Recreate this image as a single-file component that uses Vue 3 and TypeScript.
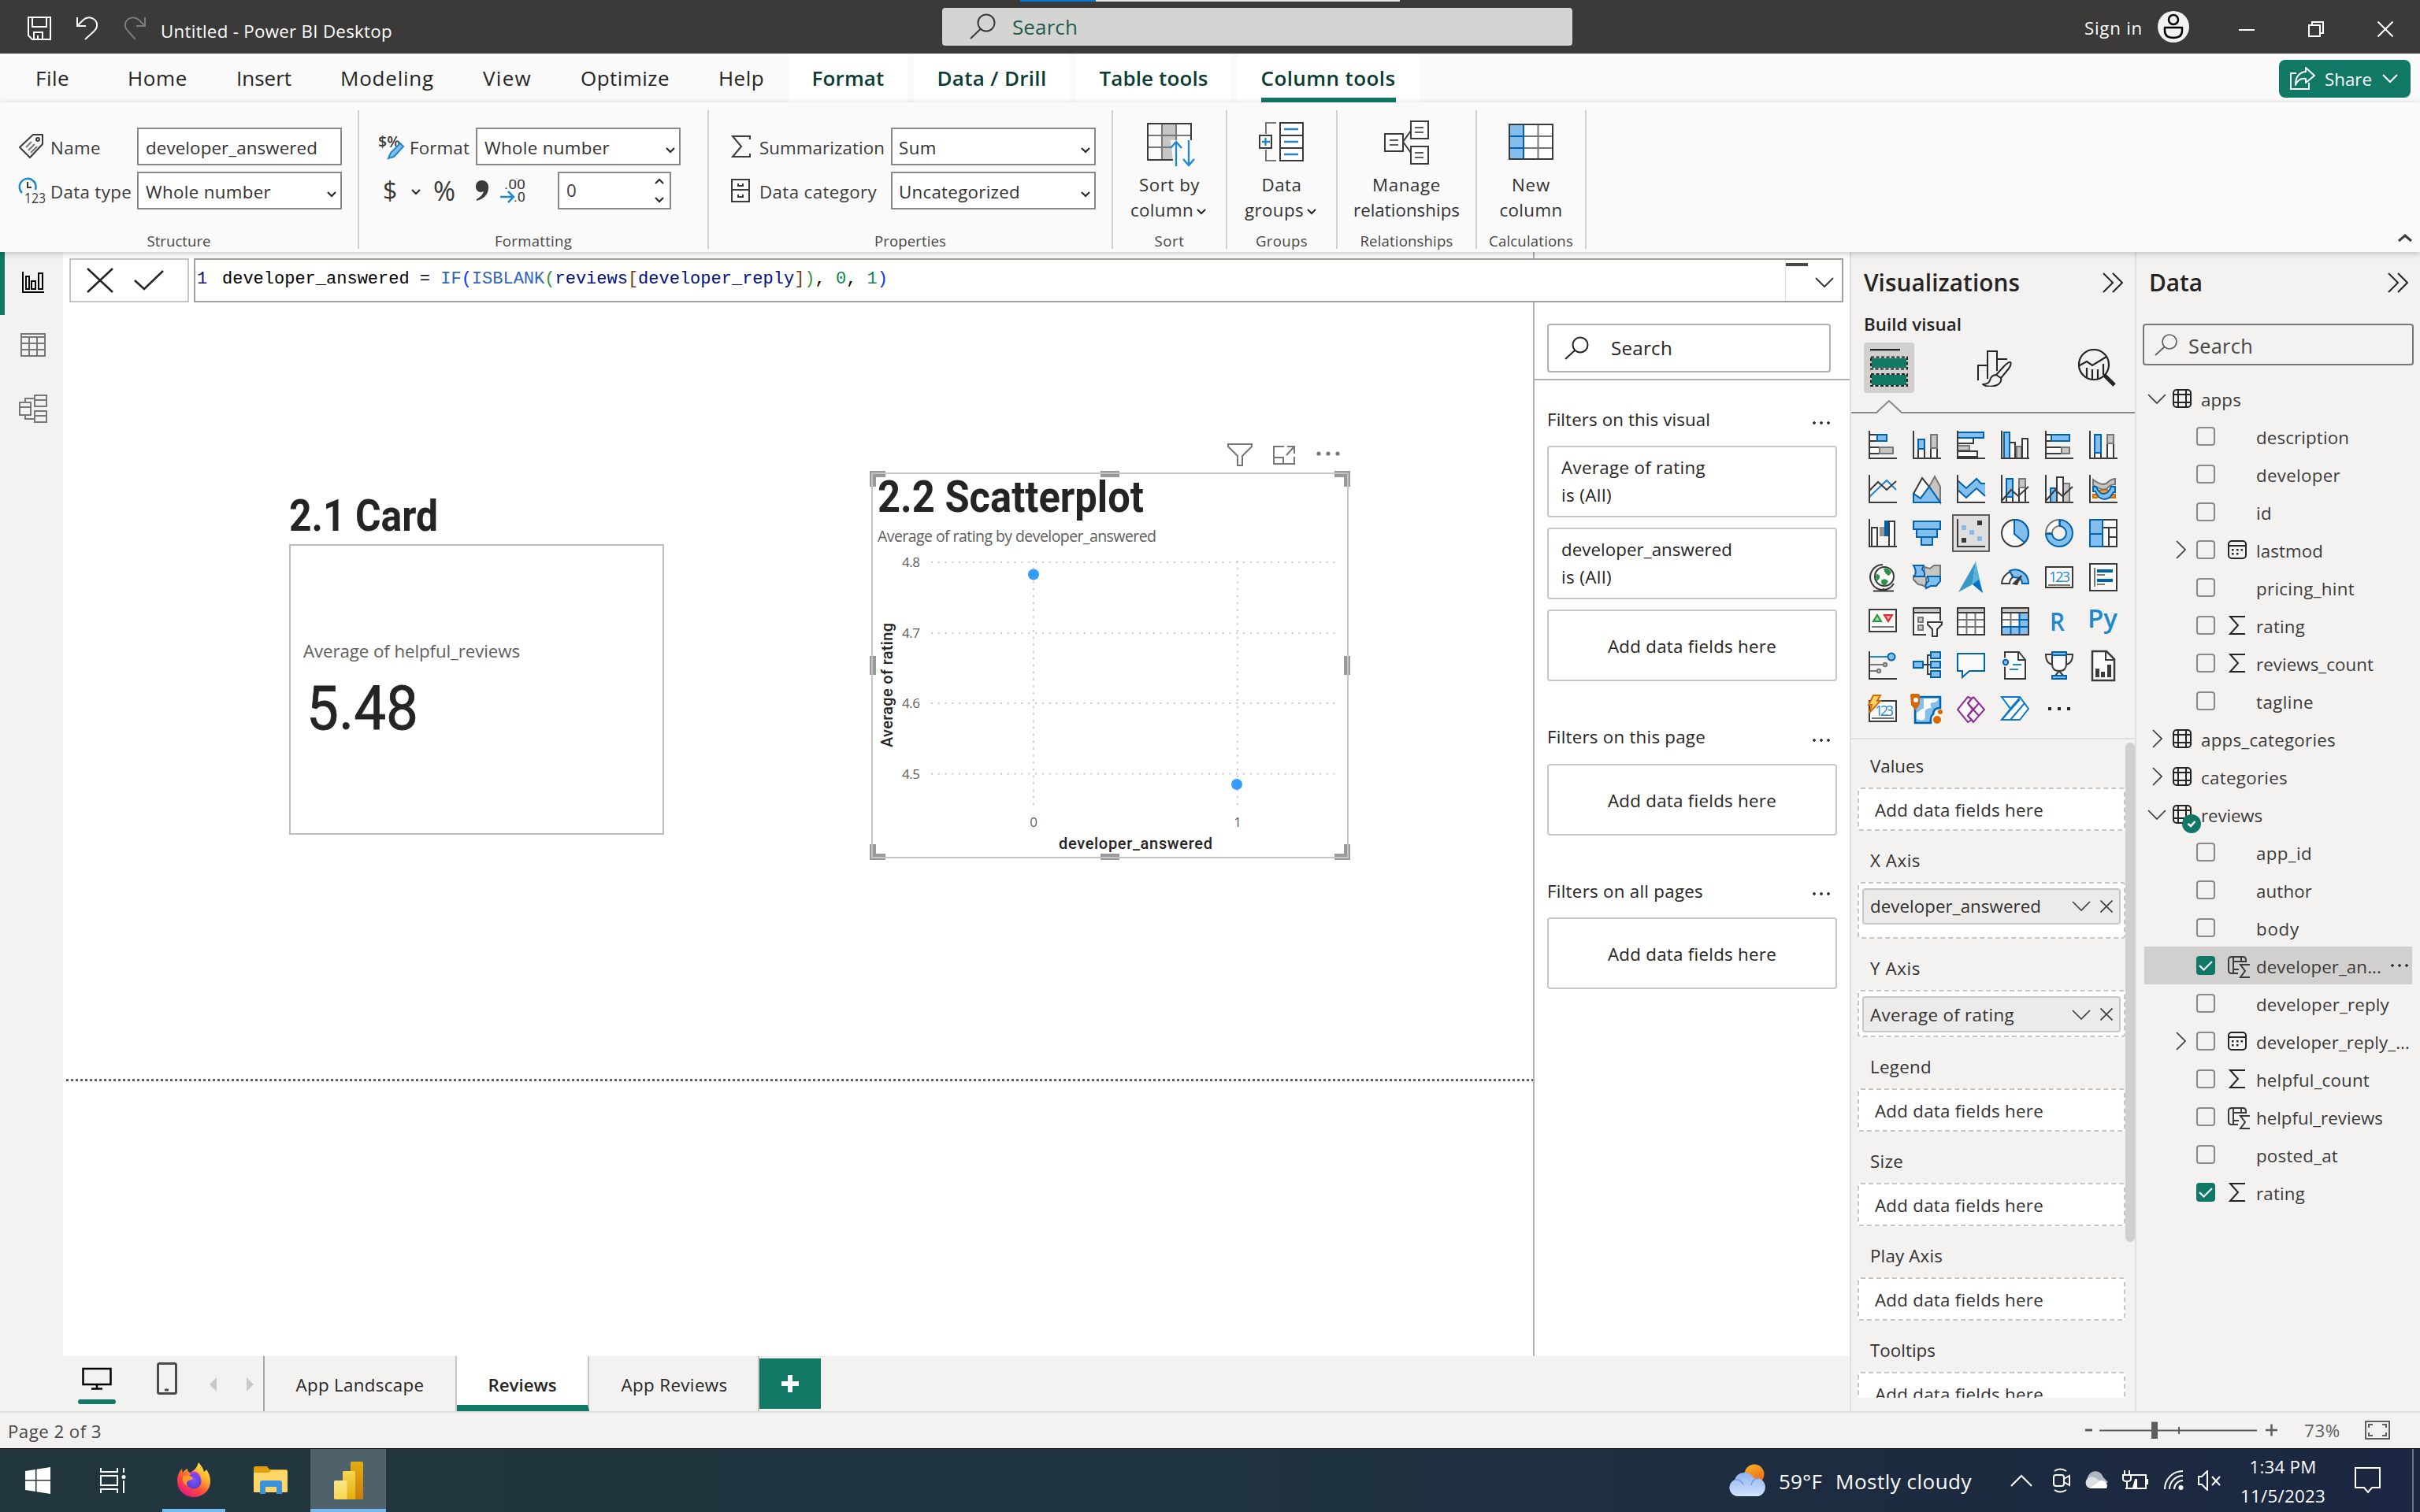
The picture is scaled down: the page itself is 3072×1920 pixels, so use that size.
<script setup lang="ts">
import type { Directive } from 'vue'

// Brings a label to its designed width whichever fallback font is in use:
// letter spacing by default, horizontal scaling with the "squeeze" modifier.
const vFit: Directive<HTMLElement, number> = {
  mounted(el, binding) {
    if (!binding.value) return
    const range = document.createRange()
    range.selectNodeContents(el)
    const natural = range.getBoundingClientRect().width
    const count = (el.textContent ?? '').length || 1
    if (binding.modifiers.squeeze) {
      el.style.transform = `scaleX(${(binding.value + 4) / natural})`
    } else {
      el.style.letterSpacing = `${(binding.value + 2 - natural) / count}px`
    }
  },
}

const D = '#3b3a38'
const B = '#0063b1'
const L = '#83beec'
const G = '#797774'
const S = '#c8c6c4'
const W = '#fafafa'

const box = (x1: number, y1: number, x2: number, y2: number, fill = W, stroke = D, sw = 2) =>
  `<rect x="${x1}" y="${y1}" width="${x2 - x1}" height="${y2 - y1}" fill="${fill}" stroke="${stroke}" stroke-width="${sw}"/>`
const line = (d: string, stroke = D, sw = 2, fill = 'none') =>
  `<path d="${d}" fill="${fill}" stroke="${stroke}" stroke-width="${sw}"/>`
const axis = line('M1 0V35H36')

const visuals: { name: string; art: string; on?: boolean }[] = [
  { name: 'stacked-bar', art: box(1, 5, 11, 13) + box(1, 21, 14, 29) + box(11, 5, 23, 13, L, B) + box(14, 21, 31, 29, S, G) + axis },
  { name: 'stacked-column', art: box(7, 23, 15, 35) + box(23, 22, 31, 35) + box(7, 11, 15, 23, L, B) + box(23, 5, 31, 22, S, G) + axis },
  { name: 'clustered-bar', art: box(1, 9, 21, 16) + box(1, 19, 16, 25, S, G) + box(1, 26, 26, 33) + box(1, 2, 34, 9, L, B) + axis },
  { name: 'clustered-column', art: box(11, 15, 18, 35) + box(20, 20, 26, 35, S, G) + box(27, 10, 34, 35) + box(4, 2, 11, 35, L, B) + axis },
  { name: 'full-bar', art: box(1, 5, 8, 13) + box(1, 21, 21, 29) + box(8, 5, 31, 13, L, B) + box(21, 21, 31, 29, S, G) + axis },
  { name: 'full-column', art: box(7, 28, 15, 35) + box(23, 16, 31, 35) + box(7, 5, 15, 28, L, B) + box(23, 5, 31, 16, S, G) + axis },
  { name: 'line', art: line('M1 28L23 7L35 19', '#1e88ce') + line('M1 20L12 9L23 19L35 8') + axis },
  { name: 'area', art: line('M21 15L28 2L35 15V35Z', G, 2, S) + line('M1 24L12 4L21 15L10 30Z', D, 2, W) + line('M1 24L10 30L21 15L35 35H1Z', B, 2, L) },
  { name: 'stacked-area', art: `<path d="M2 18L12 29L25 17L36 27V34H2Z" fill="${W}"/><path d="M2 8L12 18L25 5L31 10H36V27L25 17L12 29L2 19Z" fill="${L}"/>` + line('M1 7L12 17L25 5L31 11H36M1 19L12 29L25 17L36 27', B) + axis },
  { name: 'line-stacked', art: box(7, 28, 15, 35) + box(23, 16, 31, 35) + box(7, 5, 15, 28, L, B) + box(23, 5, 31, 16, S, G) + line('M1 33L13 19L22 27L35 15') + axis },
  { name: 'line-clustered', art: box(7, 17, 15, 35, L, B) + box(23, 11, 31, 35, S, G) + box(15, 3, 23, 35) + line('M1 33L13 19L22 27L35 15') + axis },
  { name: 'ribbon', art: line('M5 25H9C14 16 24 16 28 25H33V29H27C22 24 15 24 10 29H5Z', '#d86800', 2, '#f8a030') + line('M5 6Q18 16 24 9Q29 5 33 5V12Q27 12 22 18Q16 20 5 13Z', G, 2, S) + line('M5 15H9C13 26 23 28 28 15H33V22H31C25 34 13 34 8 21H5Z', B, 2, L) + axis },
  { name: 'waterfall', art: box(4, 11, 11, 35) + `<path d="M14 10h6v12h-6z" fill="#979593"/><path d="M20 2h5v20h-5z" fill="${B}"/>` + box(26, 3, 33, 35) + axis },
  { name: 'funnel', art: box(1, 3, 35, 13, L, B) + box(5, 13, 31, 23, L, B) + box(11, 23, 25, 33, L, B) },
  { name: 'scatter', on: true, art: `<path d="M6 8h6v6H6zM16 14h6v6h-6zM26 22h6v6h-6z" fill="${L}"/><path d="M26 2h6v6h-6zM6 24h6v6H6z" fill="${D}"/>` + axis },
  { name: 'pie', art: `<circle cx="18" cy="18" r="17" fill="${W}" stroke="${D}" stroke-width="2"/>` + line('M17 1A17 17 0 0 1 30 30L17 19Z', B, 2, L) },
  { name: 'donut', art: line('M18 1A17 17 0 0 0 1 18H9A9 9 0 0 1 18 9Z', G, 2, W) + line('M19 1A17 17 0 1 1 1 19H9A9 9 0 1 0 19 9Z', B, 2, L) },
  { name: 'treemap', art: box(17, 1, 35, 35) + line('M17 11H35M25 11V35M25 23H35') + box(1, 1, 17, 35, L, B) + line('M1 19H17', B) },
  { name: 'globe', art: `<circle cx="20" cy="17" r="12" fill="${W}" stroke="${D}" stroke-width="2"/><path d="M19 7q6-2 10 5l-3 4q-5-1-7-9zM10 14q5 0 4 5l-3 4q-3-5-1-9zM16 22q5-4 9 1l-4 6q-6-2-5-7z" fill="#2a9446"/>` + line('M18 2A16 16 0 1 0 32 26M19 32V35M6 35.5H32') },
  { name: 'filled-map', art: line('M15 5L22 7L27 3H35V18H17L17 31L12 28L7 27L1 21V16H14Z', G, 2, S) + line('M1 3H14L12 8Q16 11 15 17H2Q6 11 1 3Z', B, 2, L) + line('M19 17H35V23L30 29H23L17 32Q15 26 20 23Z', B, 2, L) },
  { name: 'azure-nav', art: '<path d="M24 -2L2 37L20 27Z" fill="#3999c6"/><path d="M24 -2L33 38L20 27Z" fill="#59b4d9"/><path d="M20 27L28 21L33 38Z" fill="#0072c6"/>' },
  { name: 'gauge', art: line('M1 26A17 17 0 0 1 12 11L15 18Q11 21 11 26Z', D, 2, W) + line('M11 10A17 17 0 0 1 35 26H27Q27 22 24 19L16 18Z', B, 2, L) + `<path d="M16 26L26 16L20 27Z" fill="${D}" stroke="${D}" stroke-width="2"/>` },
  { name: 'card', art: box(1, 5, 35, 31) + `<text x="5" y="24" font-family="Open Sans, sans-serif" font-size="18" textLength="27" fill="#1e88ce">123</text>` + line('M4 28H32', G) },
  { name: 'multi-card', art: box(1, 1, 35, 35) + line('M7 6V30M10 15H20M10 27H20', G) + line('M10 10H30M10 22H30', B, 4) },
  { name: 'kpi', art: box(1, 3, 35, 31) + line('M6 18L11 10L16 18Z', '#2a9446', 2, '#a4d8ac') + line('M20 10H30L25 18Z', '#d92c2c', 2, '#f8a0a0') + line('M4 25H32', G) },
  { name: 'slicer', art: box(1, 1, 35, 35) + box(1, 1, 35, 7, S) + box(7, 13, 13, 19, S, G) + box(7, 23, 13, 29, S, G) + `<path d="M17 17h22v20H17z" fill="#f3f2f1"/>` + line('M19 19H37V22L31 28V37H25V28L19 22Z', D, 2, W) },
  { name: 'table', art: box(1, 1, 35, 35) + line('M12.500 7V35M23.500 7V35M1 16H35M1 25H35', G) + box(1, 1, 35, 35, 'none') + box(1, 1, 35, 7, S) },
  { name: 'matrix', art: box(1, 1, 35, 35) + `<path d="M24 7h11v28H1V25h23z" fill="${L}"/>` + line('M12.500 7V25M1 16H24', G) + line('M12.500 25V35M23.500 7V35M1 25H35M24 16H35', B) + box(1, 1, 35, 35, 'none') + box(1, 1, 35, 7, S) },
  { name: 'r', art: `<text x="6" y="30" font-family="Open Sans, sans-serif" font-weight="600" font-size="33" textLength="19" lengthAdjust="spacingAndGlyphs" fill="#1e88ce">R</text>` },
  { name: 'py', art: `<text x="-2" y="26" font-family="Open Sans, sans-serif" font-weight="600" font-size="33" textLength="38" lengthAdjust="spacingAndGlyphs" fill="#1e88ce">Py</text>` },
  { name: 'influencers', art: line('M1 7H24', '#1e88ce') + line('M1 17H18M1 25H10', G) + `<circle cx="29" cy="7" r="4.500" fill="${L}" stroke="${B}" stroke-width="2"/><circle cx="21" cy="17" r="2.200" fill="${S}" stroke="${G}" stroke-width="2"/><circle cx="13" cy="25" r="2.200" fill="${S}" stroke="${G}" stroke-width="2"/>` + axis },
  { name: 'decomposition', art: line('M13 17H23M23 5H19V29H23') + box(1, 13, 13, 21, L, B) + box(23, 1, 35, 9, L, B) + box(23, 13, 35, 21, L, B) + box(23, 25, 35, 33, L, B) },
  { name: 'qna', art: line('M1 3H35V25H16L7 33V25H1Z', B, 2, W) },
  { name: 'narrative', art: line('M5 1H23L31 11V35H5Z', D, 2, W) + line('M22 1V11H31') + line('M15 17H26M11 23H22', '#1e88ce') + `<circle cx="6" cy="14" r="6" fill="#f3f2f1"/><circle cx="6" cy="14" r="3.200" fill="${L}" stroke="${B}" stroke-width="2"/>` },
  { name: 'trophy', art: line('M9 4H1Q1 17 12 17M27 4H35Q35 17 24 17') + line('M9 5H27V16Q27 25 18 25Q9 25 9 16Z', D, 2, W) + line('M18 25L13 31M18 25L23 31') + box(9, 1, 27, 5, L, B) + box(9, 31, 27, 35, L, B) },
  { name: 'paginated', art: line('M4 0H22L32 10V37H4Z', D, 2.5, W) + line('M21 0V11H32') + `<path d="M8 22h5v11H8zM15 26h5v7h-5zM23 17h5v16h-5z" fill="${D}"/>` },
  { name: 'card-new', art: box(1, 7, 35, 33) + `<text x="8" y="26" font-family="Open Sans, sans-serif" font-size="18" textLength="24" fill="#1e88ce">123</text>` + line('M4 29H32', G) + line('M6 0H15L11 7H15L1 22L4 12H0Z', '#d86800', 2, '#fdd06c') },
  { name: 'azure-map', art: line('M3 2H35V16Q26 16 26 24Q22 26 23 35H3Z', B, 2.5, L) + '<path d="M5 30Q17 35 16 24Q14 16 24 16Q20 8 28 9Q32 7 33 4H14V16L5 22Z" fill="#fafafa"/><path d="M-3 0q0-2 2-2h8q2 0 2 2v11l-5.500 8L-2 12z" fill="#d86800"/><circle cx="4" cy="6" r="3" fill="#fff"/><circle cx="31" cy="31" r="5" fill="#d86800"/><circle cx="35" cy="21" r="3" fill="#d86800"/>' },
  { name: 'power-apps', art: line('M14 2L1 18L14 34L19 31L14 26L20 18L14 10L19 4Z', '#8c2f98', 2, '#fff') + line('M21 2L35 18L21 34L14 26L28 10M14 10L28 26M14 10L21 2', '#8c2f98', 2, 'none') },
  { name: 'power-automate', art: line('M1 2H24L35 17L24 31H1L12 17Z', '#0a78d4', 2, '#fff') + line('M12 17L24 3M1 31L24 5M12 31L30 10', '#0a78d4') },
  { name: 'more', art: '<path d="M4 15h4v4H4zM16 15h4v4h-4zM28 15h4v4h-4z" fill="#252423"/>' },
]

const menu: [string, number][] = [
  ['File', 41], ['Home', 74], ['Insert', 68], ['Modeling', 117], ['View', 60], ['Optimize', 111], ['Help', 56],
]
const contextual: [string, number][] = [
  ['Format', 90], ['Data / Drill', 137], ['Table tools', 136], ['Column tools', 169],
]

const wells = [
  { label: 'Values', w: 66, h: 55 },
  { label: 'X Axis', w: 62, h: 72.5, field: 'developer_answered', fw: 215 },
  { label: 'Y Axis', w: 62, h: 59.5, field: 'Average of rating', fw: 181 },
  { label: 'Legend', w: 76, h: 55 },
  { label: 'Size', w: 40, h: 55 },
  { label: 'Play Axis', w: 90, h: 55 },
  { label: 'Tooltips', w: 81, h: 55 },
]

type Kind = 'sum' | 'date' | 'calc'
interface Row { text: string; w: number; table?: boolean; open?: boolean; arrow?: boolean; kind?: Kind; checked?: boolean; selected?: boolean; badge?: boolean }
const rows: Row[] = [
  { text: 'apps', w: 49, table: true, open: true },
  { text: 'description', w: 116 },
  { text: 'developer', w: 105 },
  { text: 'id', w: 18 },
  { text: 'lastmod', w: 83, arrow: true, kind: 'date' },
  { text: 'pricing_hint', w: 123 },
  { text: 'rating', w: 60, kind: 'sum' },
  { text: 'reviews_count', w: 147, kind: 'sum' },
  { text: 'tagline', w: 71 },
  { text: 'apps_categories', w: 169, table: true },
  { text: 'categories', w: 108, table: true },
  { text: 'reviews', w: 76, table: true, open: true, badge: true },
  { text: 'app_id', w: 69 },
  { text: 'author', w: 69 },
  { text: 'body', w: 53 },
  { text: 'developer_an...', w: 157, kind: 'calc', checked: true, selected: true },
  { text: 'developer_reply', w: 167 },
  { text: 'developer_reply_...', w: 193, arrow: true, kind: 'date' },
  { text: 'helpful_count', w: 142, kind: 'sum' },
  { text: 'helpful_reviews', w: 159, kind: 'calc' },
  { text: 'posted_at', w: 102 },
  { text: 'rating', w: 60, kind: 'sum', checked: true },
]

const kindArt: Record<Kind, string> = {
  sum: line('M22 1H3L13 12L3 23H22', '#252423'),
  date: '<rect x="1" y="1" width="22" height="22" rx="4" fill="none" stroke="#252423" stroke-width="2"/><path d="M1 7H23" stroke="#252423" stroke-width="2"/><path d="M5 11h2.500v2.500H5zM11 11h2.500v2.500H11zM16.500 11h2.500v2.500h-2.500zM5 16h2.500v2.500H5zM11 16h2.500v2.500H11z" fill="#252423"/>',
  calc: '<path d="M13 22H5Q1 22 1 18V5Q1 1 5 1H19Q23 1 23 5V8M7 1V22M7 7H23M17 1V7M7 17H14" fill="none" stroke="#3b3a38" stroke-width="2"/><path d="M28 11H16L22 19L16 27H28" fill="none" stroke="#3b3a38" stroke-width="2"/>',
}

const yTicks = [
  { t: '4.8', y: 714 }, { t: '4.7', y: 804 }, { t: '4.6', y: 893 }, { t: '4.5', y: 982.5 },
]
const xTicks = [{ t: '0', x: 1312 }, { t: '1', x: 1571 }]
const handles = [
  'M1104 618V598H1124V606H1112V618Z', 'M1694 598H1714V618H1706V606H1694Z',
  'M1104 1072V1092H1124V1084H1112V1072Z', 'M1694 1092H1714V1072H1706V1084H1694Z',
  'M1397 598h24v8h-24z', 'M1397 1084h24v8h-24z', 'M1104 833h8v24h-8z', 'M1706 833h8v24h-8z',
]
</script>

<template>
  <div class="screen">
    <header class="titlebar">
      <div class="quick">
        <svg width="30" height="30" viewBox="0 0 30 30" fill="none" stroke="#fff" stroke-width="2"><path d="M1 1H29V29H6L1 24ZM6 1V13H24V1M8 29V20H19V29M13 24V29" /></svg>
        <svg width="28" height="30" viewBox="0 0 28 30" fill="none" stroke="#fff" stroke-width="2"><path d="M1 1V12H12M1 12L9 4C16 -2 27 3 26 12C26 15 24 17 22 19L11 29" /></svg>
        <svg width="28" height="30" viewBox="0 0 28 30" fill="none" stroke="#7c7b79" stroke-width="2"><path d="M27 1V12H16M27 12L19 4C12 -2 1 3 2 12C2 15 4 17 6 19L15 29" /></svg>
      </div>
      <span class="apptitle" v-fit="292">Untitled - Power BI Desktop</span>
      <div class="progress"><i></i></div>
      <div class="topsearch">
        <svg width="34" height="34" viewBox="0 0 34 34" fill="none" stroke="#3b3a38" stroke-width="2"><circle cx="21" cy="12" r="10.500" /><path d="M13.500 20L1 32" /></svg>
        <span v-fit="81">Search</span>
      </div>
      <div class="account">
        <span v-fit="72">Sign in</span>
        <svg width="40" height="40" viewBox="0 0 40 40"><circle cx="20" cy="20" r="20" fill="#f3f2f1" /><circle cx="20" cy="11" r="6" fill="none" stroke="#000" stroke-width="2.500" /><path d="M9 21H31V25Q31 34 20 34Q9 34 9 25Z" fill="none" stroke="#000" stroke-width="2.500" stroke-linejoin="round" /></svg>
      </div>
      <div class="winbtns">
        <svg width="20" height="20" viewBox="0 0 20 20" stroke="#fff" stroke-width="2"><path d="M0 11H20" /></svg>
        <svg width="20" height="20" viewBox="0 0 20 20" fill="none" stroke="#fff" stroke-width="2"><path d="M1 5H15V19H1ZM5 5V1H19V15H15" /></svg>
        <svg width="20" height="20" viewBox="0 0 20 20" fill="none" stroke="#fff" stroke-width="2"><path d="M0.500 0.500L19.500 19.500M19.500 0.500L0.500 19.500" /></svg>
      </div>
    </header>

    <nav class="tabs">
      <span v-for="m in menu" :key="m[0]" class="tab"><b v-fit="m[1]">{{ m[0] }}</b></span>
      <div class="ctx">
        <span v-for="(c, i) in contextual" :key="c[0]" class="ctab" :class="{ active: i === 3 }"><b v-fit="c[1]">{{ c[0] }}</b></span>
      </div>
      <button class="share">
        <svg width="32" height="30" viewBox="0 0 32 30" fill="none" stroke="#fff" stroke-width="2"><path d="M8 8H1V28H24V20" /><path d="M20 1L31 11L20 20V15C13 14 9 18 7 23C7 13 11 7 20 6Z" stroke-linejoin="round" /></svg>
        <span v-fit="58">Share</span>
        <svg width="20" height="12" viewBox="0 0 20 12" fill="none" stroke="#fff" stroke-width="2"><path d="M1 1L10 10L19 1" /></svg>
      </button>
    </nav>

    <section class="ribbon">
      <div class="group g1">
        <div class="rows">
          <div class="row">
            <svg class="ri" width="34" height="34" viewBox="0 0 34 34" fill="none" stroke="#3b3a38" stroke-width="2"><path d="M18 2H30V14L14 31L1 18Z" stroke-linejoin="round" /><circle cx="24" cy="8" r="2" /><path d="M9 18L16 11M12 22L20 14M15 25L23 17" stroke="#797774" /></svg>
            <span class="lab" v-fit="62">Name</span>
            <div class="field"><span v-fit="216">developer_answered</span></div>
          </div>
          <div class="row">
            <svg class="ri" width="34" height="34" viewBox="0 0 34 34" fill="none"><path d="M4 20A10.500 10.500 0 1 1 21 16" stroke="#1e88ce" stroke-width="2.500" /><path d="M11 6V13H16" stroke="#3b3a38" stroke-width="2" /><text x="7" y="33" font-family="Open Sans, sans-serif" font-size="18" textLength="27" lengthAdjust="spacingAndGlyphs" fill="#3b3a38">123</text></svg>
            <span class="lab" v-fit="101">Data type</span>
            <div class="field sel"><span v-fit="157">Whole number</span><svg class="cv" viewBox="0 0 12 8"><path d="M1 1L6 6L11 1" /></svg></div>
          </div>
        </div>
        <div class="gl"><span v-fit="79">Structure</span></div>
      </div>

      <div class="group g2">
        <div class="rows">
          <div class="row">
            <svg class="ri" width="34" height="34" viewBox="0 0 34 34" fill="none"><text x="0" y="18" font-family="Open Sans, sans-serif" font-weight="600" font-size="19" textLength="28" lengthAdjust="spacingAndGlyphs" fill="#3b3a38">$%</text><path d="M28 13L32 17L20 30L13 32L16 25Z" fill="#83beec" stroke="#1e88ce" stroke-width="2" /></svg>
            <span class="lab" v-fit="74">Format</span>
            <div class="field sel"><span v-fit="157">Whole number</span><svg class="cv" viewBox="0 0 12 8"><path d="M1 1L6 6L11 1" /></svg></div>
          </div>
          <div class="row fmt">
            <span class="sym dollar">$</span>
            <svg class="cv dcv" viewBox="0 0 12 8"><path d="M1 1L6 6L11 1" /></svg>
            <span class="sym pct">%</span>
            <svg class="comma" width="17" height="26" viewBox="0 0 17 26"><path d="M8 0C13 0 17 4 16 11C15 19 9 24 1 26V24C6 21 9 18 10 14C3 17 0 12 0 8C0 3 3 0 8 0Z" fill="#3b3a38" /></svg>
            <svg class="dec" width="34" height="34" viewBox="0 0 34 34" fill="none"><text x="5" y="15" font-family="Roboto, sans-serif" font-size="17" textLength="27" lengthAdjust="spacingAndGlyphs" fill="#3b3a38">.00</text><text x="17" y="31" font-family="Roboto, sans-serif" font-size="17" textLength="15" lengthAdjust="spacingAndGlyphs" fill="#3b3a38">.0</text><path d="M0 25H16M10 18L17 25L10 32" stroke="#1e88ce" stroke-width="2.500" /></svg>
            <div class="spin"><span>0</span><div class="arrows"><svg class="cv" viewBox="0 0 12 8"><path d="M1 7L6 2L11 7" /></svg><svg class="cv" viewBox="0 0 12 8"><path d="M1 1L6 6L11 1" /></svg></div></div>
          </div>
        </div>
        <div class="gl"><span v-fit="96">Formatting</span></div>
      </div>

      <div class="group g3">
        <div class="rows">
          <div class="row">
            <svg class="ri" width="26" height="30" viewBox="0 0 26 30" fill="none" stroke="#3b3a38" stroke-width="2"><path d="M24 6V2H2L13 15L2 28H24V24" /></svg>
            <span class="lab" v-fit="157">Summarization</span>
            <div class="field sel"><span v-fit="46">Sum</span><svg class="cv" viewBox="0 0 12 8"><path d="M1 1L6 6L11 1" /></svg></div>
          </div>
          <div class="row">
            <svg class="ri" width="26" height="32" viewBox="0 0 26 32" fill="none" stroke="#3b3a38" stroke-width="2"><path d="M1 2H23V30H1ZM1 15H23M9 7V10H15V7M9 21V24H15V21" /></svg>
            <span class="lab" v-fit="147">Data category</span>
            <div class="field sel"><span v-fit="152">Uncategorized</span><svg class="cv" viewBox="0 0 12 8"><path d="M1 1L6 6L11 1" /></svg></div>
          </div>
        </div>
        <div class="gl"><span v-fit="89">Properties</span></div>
      </div>

      <div class="group big g4">
        <svg width="62" height="62" viewBox="0 0 62 62" fill="none" stroke-width="2"><path d="M1 7H56V53H36L35 52H1Z" fill="#fafafa" /><path d="M19 7H37V53H19Z" fill="#c8c6c4" /><path d="M1 22H56M1 37H32M19 8V52M37 8V30" stroke="#797774" /><path d="M34 53H1V7H56V28" stroke="#3b3a38" /><path d="M30 28H62V62H34Z" fill="#fafafa" /><path d="M37 61V30M30 38L37 30L44 38M53 28V60M46 52L53 60L60 52" stroke="#1e88ce" stroke-width="2.300" /></svg>
        <div class="bl"><span v-fit="75">Sort by</span></div>
        <div class="bl"><span v-fit="78">column</span><svg class="cv" viewBox="0 0 12 8"><path d="M1 1L6 6L11 1" /></svg></div>
        <div class="gl"><span v-fit="36">Sort</span></div>
      </div>
      <div class="group big g5">
        <svg width="58" height="62" viewBox="0 0 58 62" fill="none" stroke-width="2"><path d="M22 6H9V20M9 40V54H22" stroke="#797774" /><path d="M27 6H56V54H27ZM27 22H56M27 38H56M1 22H16V38H1Z" stroke="#3b3a38" fill="#fff" /><path d="M32 14H50M32 30H50M32 46H50M4 30H14M8.500 25V35" stroke="#1e88ce" stroke-width="2.300" /></svg>
        <div class="bl"><span v-fit="49">Data</span></div>
        <div class="bl"><span v-fit="73">groups</span><svg class="cv" viewBox="0 0 12 8"><path d="M1 1L6 6L11 1" /></svg></div>
        <div class="gl"><span v-fit="64">Groups</span></div>
      </div>
      <div class="group big g6">
        <svg width="58" height="62" viewBox="0 0 58 62" fill="none" stroke="#3b3a38" stroke-width="2"><path d="M24 30L34 16M24 30L34 44" /><path d="M1 20H24V42H1ZM34 4H56V26H34ZM34 36H56V58H34Z" fill="#fff" /><path d="M7 28H18M7 34H18M39 12H50M39 18H50M39 44H50M39 50H50" stroke="#605e5c" /></svg>
        <div class="bl"><span v-fit="85">Manage</span></div>
        <div class="bl"><span v-fit="133">relationships</span></div>
        <div class="gl"><span v-fit="116">Relationships</span></div>
      </div>
      <div class="group big g7">
        <svg width="58" height="62" viewBox="0 0 58 62" fill="none" stroke-width="2"><path d="M1 8H56V52H1Z" fill="#fff" /><path d="M19 8V52M37.500 8V52M1 23H56M1 38H56" stroke="#797774" /><path d="M1 8H56V52H1Z" stroke="#3b3a38" /><path d="M1 8H19V52H1Z" fill="#83beec" /><path d="M1 23H19M1 38H19M19 8V52" stroke="#0063b1" /><path d="M19 8H1V52H19" stroke="#3b3a38" /></svg>
        <div class="bl"><span v-fit="47">New</span></div>
        <div class="bl"><span v-fit="78">column</span></div>
        <div class="gl"><span v-fit="105">Calculations</span></div>
      </div>
      <svg class="collapse" width="18" height="10" viewBox="0 0 18 10" fill="none" stroke="#3b3a38" stroke-width="3"><path d="M1 9L9 2L17 9" /></svg>
    </section>

    <main class="main">
      <div class="left">
        <div class="work">
          <aside class="rail">
            <div class="rbtn on"><svg width="28" height="28" viewBox="0 0 28 28" fill="none" stroke="#000" stroke-width="2"><path d="M1 0V26H28" /><path d="M5 6H9V22H5ZM12 12H17V22H12ZM21 2H26V22H21Z" /></svg></div>
            <div class="rbtn"><svg width="32" height="30" viewBox="0 0 32 30" fill="none" stroke="#797774" stroke-width="2"><path d="M1 1H31V29H1ZM1 5H31M1 13H31M1 21H31M11 5V29M21 5V29" /></svg></div>
            <div class="rbtn"><svg width="36" height="36" viewBox="0 0 36 36" fill="none" stroke="#797774" stroke-width="2"><path d="M1 10H15V26H1ZM1 16H15M20 1H35V15H20ZM20 7H35M20 21H35V35H20ZM20 27H35M8 10V5H20M8 26V31H20" /></svg></div>
          </aside>
          <div class="center">
            <div class="formula">
              <div class="fbtns">
                <svg width="34" height="32" viewBox="0 0 34 32" fill="none" stroke="#252423" stroke-width="2.500"><path d="M1 1L33 31M33 1L1 31" /></svg>
                <svg width="38" height="26" viewBox="0 0 38 26" fill="none" stroke="#252423" stroke-width="2.500"><path d="M1 13L13 24L37 1" /></svg>
              </div>
              <div class="fbox">
                <code class="ln">1</code><code><i class="k">developer_answered = </i><i class="fn">IF</i><i class="par1">(</i><i class="fn">ISBLANK</i><i class="par2">(</i><i class="id">reviews</i><i class="br">[</i><i class="id">developer_reply</i><i class="br">]</i><i class="par2">)</i><i class="k">, </i><i class="nm">0</i><i class="k">, </i><i class="nm">1</i><i class="par1">)</i></code>
                <div class="fend"><b></b><svg width="24" height="14" viewBox="0 0 24 14" fill="none" stroke="#3b3a38" stroke-width="2"><path d="M1 1L12 12L23 1" /></svg></div>
              </div>
            </div>
            <div class="stage">
              <div class="canvas">
                <div class="cardtitle din" v-fit.squeeze="185">2.1 Card</div>
                <div class="card">
                  <div class="clabel"><span v-fit="273">Average of helpful_reviews</span></div>
                  <div class="cval din" v-fit.squeeze="138">5.48</div>
                </div>
                <svg class="chart" width="640" height="550" viewBox="1090 550 640 550">
                  <g fill="none" stroke="#797774" stroke-width="2">
                    <path d="M1559 564H1589V567L1577 579V591H1571V579L1559 567Z" />
                    <path d="M1630 567H1617V589H1643V580M1617 581H1629V589M1634 567H1643V576M1643 567L1633 578" />
                  </g>
                  <g fill="#797774"><circle cx="1674" cy="576" r="2.600" /><circle cx="1686" cy="576" r="2.600" /><circle cx="1698" cy="576" r="2.600" /></g>
                  <path v-for="h in handles" :key="h" :d="h" fill="#999" />
                  <rect x="1107" y="601" width="604" height="488" fill="none" stroke="#c4c4c4" stroke-width="2" />
                  <text x="1114" y="650" font-family="Roboto" font-weight="700" font-size="55" textLength="338" lengthAdjust="spacingAndGlyphs" fill="#252423">2.2 Scatterplot</text>
                  <text x="1114" y="688" font-size="19.500" textLength="354" fill="#605e5c">Average of rating by developer_answered</text>
                  <g stroke="#c8c8c8" stroke-width="2" stroke-dasharray="2 6.800">
                    <path v-for="t in yTicks" :key="t.t" :d="`M1182 ${t.y}H1701`" />
                    <path v-for="t in xTicks" :key="t.t" :d="`M${t.x} 712V1029`" />
                  </g>
                  <g font-size="17" fill="#605e5c">
                    <text v-for="t in yTicks" :key="t.t" x="1145" :y="t.y + 6" textLength="23">{{ t.t }}</text>
                    <text v-for="t in xTicks" :key="t.t" :x="t.x" y="1050" text-anchor="middle">{{ t.t }}</text>
                  </g>
                  <circle cx="1312" cy="729.500" r="7" fill="#118dff" fill-opacity=".86" />
                  <circle cx="1570" cy="996" r="7" fill="#118dff" fill-opacity=".86" />
                  <g font-family="Roboto" font-weight="500" font-size="20" fill="#252423">
                    <text x="1344" y="1077.500" textLength="195">developer_answered</text>
                    <text transform="translate(1133 949) rotate(-90)" textLength="158">Average of rating</text>
                  </g>
                </svg>
                <div class="pageend"></div>
              </div>
              <div class="filters">
                <div class="fsearch">
                  <svg width="32" height="32" viewBox="0 0 32 32" fill="none" stroke="#252423" stroke-width="2"><circle cx="20" cy="12" r="9.500" /><path d="M13 19L1 30" /></svg>
                  <span v-fit="76">Search</span>
                </div>
                <div class="fbody">
                  <div class="fh"><span v-fit="205">Filters on this visual</span><i class="dots"></i></div>
                  <div class="fc two"><span v-fit="181">Average of rating</span><span v-fit="62">is (All)</span></div>
                  <div class="fc two"><span v-fit="215">developer_answered</span><span v-fit="62">is (All)</span></div>
                  <div class="fc"><span v-fit="212">Add data fields here</span></div>
                  <div class="fh later"><span v-fit="199">Filters on this page</span><i class="dots"></i></div>
                  <div class="fc"><span v-fit="212">Add data fields here</span></div>
                  <div class="fh later"><span v-fit="196">Filters on all pages</span><i class="dots"></i></div>
                  <div class="fc"><span v-fit="212">Add data fields here</span></div>
                </div>
              </div>
            </div>
          </div>
        </div>
        <div class="pages">
          <div class="devices">
            <div class="desk"><svg width="38" height="30" viewBox="0 0 38 30" fill="none" stroke="#000" stroke-width="2.500"><path d="M1.500 2H36.500V22H1.500ZM19 22V28M12 27.500H26" /></svg><i></i></div>
            <svg class="phone" width="26" height="42" viewBox="0 0 26 42" fill="none" stroke="#4a4a4a" stroke-width="3"><rect x="1.500" y="1.500" width="23" height="38" rx="2" /><path d="M10 35h5" /></svg>
            <svg class="prev" width="10" height="18" viewBox="0 0 10 18"><path d="M9 0V18L0 9Z" fill="#c8c8c8" /></svg>
            <svg class="next" width="10" height="18" viewBox="0 0 10 18"><path d="M1 0V18L10 9Z" fill="#c8c8c8" /></svg>
          </div>
          <div class="ptab first"><span v-fit="161">App Landscape</span></div>
          <div class="ptab current"><span v-fit="85">Reviews</span></div>
          <div class="ptab last"><span v-fit="133">App Reviews</span></div>
          <div class="plus"><svg width="22" height="22" viewBox="0 0 22 22" stroke="#fff" stroke-width="6"><path d="M0 11H22M11 0V22" /></svg></div>
        </div>
      </div>

      <aside class="viz">
        <div class="ph"><h2 v-fit="196">Visualizations</h2><svg width="26" height="26" viewBox="0 0 26 26" fill="none" stroke="#252423" stroke-width="2"><path d="M1 1L13 13L1 25M13 1L25 13L13 25" /></svg></div>
        <div class="build"><span v-fit="122">Build visual</span></div>
        <div class="vtabs">
          <div class="vt on">
            <svg width="48" height="48" viewBox="0 0 48 48"><path d="M0 1H38" stroke="#252423" stroke-width="2.500" /><path d="M2 12H46V24H2ZM2 33H46V46H2Z" fill="#117865" /><path d="M1 10.500H47V25.500H1ZM1 32H47V47H1Z" fill="none" stroke="#252423" stroke-width="2" stroke-dasharray="4 2.500" /></svg>
          </div>
          <div class="vt paint">
            <svg width="48" height="48" viewBox="0 0 48 48" fill="none" stroke="#252423" stroke-width="2"><path d="M3 40V21H15M15 38V3H27V28M27 13H40" /><path d="M44 17C46 19 44 22 42 25L32 37L26 33L36 22C39 19 42 16 44 17ZM26 33C22 33 19 36 18 40C17 43 14 45 9 45C14 49 22 48 27 46C31 44 33 41 32 37" fill="#f3f2f1" stroke-linejoin="round" /></svg>
          </div>
          <div class="vt">
            <svg width="48" height="48" viewBox="0 0 48 48" fill="none" stroke="#252423" stroke-width="2.200"><circle cx="20" cy="20" r="19" /><path d="M2 21L11 16L18 21L36 10M11 24V36M18 26V39M25 26V38M32 19V33" /><path d="M33 33L46 46" stroke-width="5" /></svg>
          </div>
        </div>
        <svg class="notch" width="360" height="20" viewBox="0 0 360 20" fill="none" stroke="#8a8886" stroke-width="2"><path d="M0 17H32L48 2L64 17H360" /></svg>
        <div class="vgrid">
          <div v-for="v in visuals" :key="v.name" class="vcell"><div :class="{ picked: v.on }"><svg width="36" height="36" viewBox="0 0 36 36" overflow="visible" v-html="v.art"></svg></div></div>
        </div>
        <div class="wellwrap">
          <div class="wells">
            <template v-for="w in wells" :key="w.label">
              <div class="wl"><span v-fit="w.w">{{ w.label }}</span></div>
              <div class="wb" :style="{ height: w.h + 'px' }">
                <div v-if="w.field" class="pill">
                  <span v-fit="w.fw ?? 0">{{ w.field }}</span>
                  <svg width="24" height="13" viewBox="0 0 24 13" fill="none" stroke="#3b3a38" stroke-width="1.600"><path d="M1 1L12 12L23 1" /></svg>
                  <svg width="16" height="16" viewBox="0 0 16 16" fill="none" stroke="#3b3a38" stroke-width="1.600"><path d="M0.500 0.500L15.500 15.500M15.500 0.500L0.500 15.500" /></svg>
                </div>
                <span v-else class="ph0" v-fit="212">Add data fields here</span>
              </div>
            </template>
          </div>
          <div class="sbar"></div>
        </div>
      </aside>

      <aside class="data">
        <div class="ph"><h2 v-fit="66">Data</h2><svg width="26" height="26" viewBox="0 0 26 26" fill="none" stroke="#252423" stroke-width="2"><path d="M1 1L13 13L1 25M13 1L25 13L13 25" /></svg></div>
        <div class="dsearch">
          <svg width="30" height="30" viewBox="0 0 30 30" fill="none" stroke="#605e5c" stroke-width="1.700"><circle cx="19" cy="11" r="9" /><path d="M12.500 17.500L1 28" /></svg>
          <span v-fit="80">Search</span>
        </div>
        <div class="tree">
          <div v-for="(r, i) in rows" :key="i" class="tr" :class="{ tb: r.table, selected: r.selected }">
            <div class="exp">
              <svg v-if="r.open" width="24" height="13" viewBox="0 0 24 13"><path d="M1 1L12 12L23 1" /></svg>
              <svg v-else-if="r.table || r.arrow" width="13" height="24" viewBox="0 0 13 24"><path d="M1 1L12 12L1 23" /></svg>
            </div>
            <template v-if="r.table">
              <div class="ticon">
                <svg width="24" height="24" viewBox="0 0 24 24" fill="none" stroke="#252423" stroke-width="2"><rect x="1" y="1" width="22" height="22" rx="4" /><path d="M1 7H23M1 17H23M7 1V23M17 1V23" /></svg>
                <svg v-if="r.badge" class="badge" width="24" height="24" viewBox="0 0 24 24"><circle cx="12" cy="12" r="12" fill="#117865" /><path d="M7.500 12L11 15L16.500 9" fill="none" stroke="#fff" stroke-width="2.500" /></svg>
              </div>
            </template>
            <template v-else>
              <div class="check" :class="{ ck: r.checked }"><svg v-if="r.checked" width="24" height="24" viewBox="0 0 24 24"><path d="M4 12L9.500 17.500L20 7" fill="none" stroke="#fff" stroke-width="2" /></svg></div>
              <div class="kind"><svg v-if="r.kind" width="28" height="24" viewBox="0 0 28 24" overflow="visible" v-html="kindArt[r.kind]"></svg></div>
            </template>
            <span v-fit="r.w">{{ r.text }}</span>
            <i v-if="r.selected" class="dots"></i>
          </div>
        </div>
      </aside>
    </main>

    <div class="status">
      <span v-fit="117">Page 2 of 3</span>
      <div class="zoom">
        <svg width="246" height="26" viewBox="0 0 246 26" stroke="#605e5c" fill="none"><path d="M1 13H10" stroke-width="3" /><path d="M19 13.500H219" stroke-width="2" /><path d="M120 9V18" stroke-width="2" /><path d="M89 2.500V24" stroke-width="8" /><path d="M230 13H245M237.500 5.500V20.500" stroke-width="2.500" /></svg>
        <span v-fit="44">73%</span>
        <svg width="32" height="24" viewBox="0 0 32 24" fill="none" stroke="#605e5c" stroke-width="2"><path d="M1 1H31V23H1ZM5 9V5H10M22 5H27V9M27 15V19H22M10 19H5V15" /></svg>
      </div>
    </div>

    <footer class="taskbar">
      <div class="app start"><svg width="32" height="34" viewBox="0 0 32 34" fill="#fff"><path d="M0 5L13 3V16H0ZM14.500 2.700L32 0V16H14.500ZM0 17.500H13V31L0 29ZM14.500 17.500H32V34L14.500 31.200Z" /></svg></div>
      <div class="app tv"><svg width="34" height="32" viewBox="0 0 34 32" fill="none" stroke="#fff" stroke-width="2"><path d="M1 0V5H22V0M1 10H22V22H1ZM1 32V27H22V32M30 0V6M30 16V32" /><circle cx="30" cy="11.500" r="2.500" fill="#fff" stroke="none" /></svg></div>
      <div class="app ff">
        <svg width="44" height="46" viewBox="0 0 44 46">
          <defs>
            <linearGradient id="fx" x1=".9" y1="0" x2=".2" y2="1"><stop offset="0" stop-color="#fff44f" /><stop offset=".35" stop-color="#ffb02c" /><stop offset=".65" stop-color="#ff4a3c" /><stop offset="1" stop-color="#e3128b" /></linearGradient>
            <radialGradient id="fp" cx=".5" cy=".4" r=".6"><stop offset="0" stop-color="#8a50ff" /><stop offset="1" stop-color="#4b3fd0" /></radialGradient>
          </defs>
          <path d="M28 1C32 6 34 9 35 13C37 12 38 10 38 10C41 14 43 19 43 25C43 37 33 45 22 45C10 45 1 36 1 24C1 18 3 13 7 9C7 12 8 13 8 14C10 11 12 10 14 9C14 12 15 13 17 14C22 12 26 8 28 1Z" fill="url(#fx)" />
          <circle cx="22" cy="25" r="9.500" fill="url(#fp)" />
          <path d="M8 19C13 16 19 18 21 21C20 24 16 23 14 25C12 27 13 29 14 31C9 29 7 24 8 19Z" fill="#ff9a28" />
          <path d="M17 14C23 11 30 14 31 22C28 16 22 15 17 16Z" fill="#b833e1" />
        </svg>
      </div>
      <div class="app ex">
        <svg width="44" height="36" viewBox="0 0 44 36"><path d="M0 2Q0 0 2 0H17L20 4H41Q43 4 43 6V33H0Z" fill="#e09f0d" /><path d="M0 8H19L22 5H41Q43 5 43 7V31Q43 33 41 33H2Q0 33 0 31Z" fill="#ffd667" /><path d="M8 35V21Q8 18 11 18H33Q36 18 36 21V35H29V26H15V35Z" fill="#3a92dc" /></svg>
      </div>
      <div class="app pb">
        <svg width="38" height="48" viewBox="0 0 38 48"><defs><linearGradient id="pa" y2="1" x2="0"><stop offset="0" stop-color="#e6ad10" /><stop offset="1" stop-color="#c87e0e" /></linearGradient><linearGradient id="pm" y2="1" x2="0"><stop offset="0" stop-color="#f6d751" /><stop offset="1" stop-color="#e6ad10" /></linearGradient><linearGradient id="pc" y2="1" x2="0"><stop offset="0" stop-color="#f9e589" /><stop offset="1" stop-color="#f6d751" /></linearGradient></defs><rect x="21" width="16" height="48" rx="1.500" fill="url(#pa)" /><path d="M11 13.500Q11 12 12.500 12H25.500Q27 12 27 13.500V48H11Z" fill="url(#pm)" /><path d="M0 25.500Q0 24 1.500 24H15Q16.500 24 16.500 25.500V48H1.500Q0 48 0 46.500Z" fill="url(#pc)" /></svg>
      </div>
      <div class="tray">
        <svg class="wx" width="50" height="42" viewBox="0 0 50 42"><defs><linearGradient id="cl" y2="1" x2="0"><stop offset="0" stop-color="#8fb3ef" /><stop offset="1" stop-color="#d3e3fc" /></linearGradient><linearGradient id="sn" y2="1" x2=".5"><stop offset="0" stop-color="#f9b52c" /><stop offset="1" stop-color="#ee6a10" /></linearGradient></defs><circle cx="34" cy="13" r="12.500" fill="url(#sn)" /><path d="M12 41A11 11 0 0 1 9 20A13 13 0 0 1 33 18A11.500 11.500 0 0 1 39 41Z" fill="url(#cl)" /><path d="M9 20A10 10 0 0 1 20 26M30 27A10 10 0 0 1 39 18" fill="none" stroke="#6f98e0" stroke-width="1.500" /></svg>
        <span class="temp" v-fit="53">59°F</span><span class="cloudy" v-fit="171">Mostly cloudy</span>
        <svg class="t1" width="28" height="16" viewBox="0 0 28 16" fill="none" stroke="#fff" stroke-width="2"><path d="M1 15L14 2L27 15" /></svg>
        <svg class="t2" width="24" height="32" viewBox="0 0 24 32" fill="none" stroke="#fff" stroke-width="2"><rect x="2" y="9" width="13" height="14" rx="3" /><path d="M15 14L22 10V22L15 18M3 4Q10 -1 18 4M3 28Q10 33 18 28" /></svg>
        <svg class="t3" width="34" height="24" viewBox="0 0 34 24"><path d="M4 13A10 10 0 0 1 24 8L30 14L16 22Z" fill="#b0b5bf" /><path d="M7 22A7.500 7.500 0 0 1 6 8Q12 6 16 10L28 20Z" fill="#dcdfe4" /><path d="M7 22L20 12A7 7 0 0 1 28 22Z" fill="#fff" /></svg>
        <svg class="t4" width="34" height="26" viewBox="0 0 34 26" fill="none" stroke="#fff" stroke-width="2"><path d="M12 6H30V23H4M32 11V18" /><path d="M3 0V6M9 0V6M1 6H11V11Q11 14 6 14Q1 14 1 11ZM6 14V23" /><path d="M14 22L17 12H18V22Z" fill="#fff" /></svg>
        <svg class="t5" width="26" height="26" viewBox="0 0 26 26" fill="none" stroke="#fff" stroke-width="2"><path d="M1 24A23 23 0 0 1 24 1M7 24A17 17 0 0 1 24 7M13 24A11 11 0 0 1 24 13" /><circle cx="21.500" cy="22" r="3" fill="#fff" stroke="none" /></svg>
        <svg class="t6" width="30" height="26" viewBox="0 0 30 26" fill="none" stroke="#fff" stroke-width="2"><path d="M1 8H5L12 1V25L5 18H1ZM18 8L28 19M28 8L18 19" /></svg>
        <div class="clock"><span v-fit="83">1:34 PM</span><span v-fit="106">11/5/2023</span></div>
        <svg class="t7" width="34" height="34" viewBox="0 0 34 34" fill="none" stroke="#fff" stroke-width="2"><path d="M1 1H32V26H22L17 32L12 26H1Z" /></svg>
        <div class="edge"></div>
      </div>
    </footer>
  </div>
</template>

<style>
body { background: #fff; overflow: hidden; }
</style>

<style scoped>
.screen { width: 3072px; height: 1920px; display: flex; flex-direction: column; overflow: hidden; font: 400 22.3px/30px "Open Sans", "Noto Sans", sans-serif; color: #252423; background: #f3f2f1; white-space: nowrap; }
.screen * { box-sizing: border-box; }
svg { display: block; flex: none; }
h2, b, i { font-weight: inherit; font-style: normal; margin: 0; }
span { flex: none; }

.titlebar { height: 68px; background: #3b3a38; color: #fff; display: flex; flex: none; align-items: center; position: relative; }
.quick { display: flex; margin: 3px 0 0 35px; gap: 32px; width: 169px; }
.apptitle { padding-top: 11px; width: 992px; }
.progress { position: absolute; left: 1295px; top: 0; width: 482px; height: 2px; background: #e6e6e6; }
.progress i { display: block; width: 96px; height: 2px; background: #0078d4; }
.topsearch { width: 800px; height: 48px; border-radius: 4px; background: #d4d4d2; color: #1f5c50; display: flex; align-items: center; font-size: 26px; }
.topsearch svg { margin: 0 20px 0 35px; }
.account { margin-left: 650px; display: flex; align-items: center; width: 196px; }
.account span { width: 93px; padding-top: 3px; }
.winbtns { display: flex; gap: 68px; padding-top: 6px; }

.tabs { height: 62px; flex: none; background: #fafafa; display: flex; padding-left: 14px; font-size: 26px; line-height: 62px; color: #252423; }
.tab { padding: 0 31px; }
.tab:first-child { margin-right: 12px; }
.tab b, .ctab b { display: block; }
.ctx { display: flex; gap: 8px; font-weight: 600; color: #0c3b34; }
.ctab { background: #fff; padding: 0 29.5px; height: 62px; }
.ctab.active b { height: 62px; border-bottom: 6px solid #117865; }
.share { margin: 8px 12px 0 auto; width: 167px; height: 48px; border: 0; border-radius: 8px; background: #117865; color: #fff; font: inherit; font-size: 22.3px; line-height: 48px; display: flex; align-items: center; padding: 0 0 0 14px; }
.share span { padding: 2px 0 0 12px; width: 85px; text-align: left; }

.ribbon { height: 190px; flex: none; background: #fafafa; display: flex; padding-top: 10px; position: relative; z-index: 2; box-shadow: 0 2px 8px rgba(0, 0, 0, .22); color: #3b3a38; }
.ribbon svg { overflow: visible; }
.group { height: 176px; border-right: 2px solid #d2d0ce; display: flex; flex-direction: column; flex: none; }
.g1 { width: 456px; } .g2 { width: 444px; } .g3 { width: 513px; } .g4 { width: 145px; } .g5 { width: 140px; } .g6 { width: 177px; } .g7 { width: 139px; }
.rows { padding: 22px 0 0 24px; display: flex; flex-direction: column; gap: 8px; }
.g3 .rows { padding-left: 28px; }
.row { display: flex; align-items: center; height: 48px; }
.ri { margin-right: 6px; }
.g3 .ri { margin-right: 10px; }
.lab { width: 110px; padding-top: 4px; }
.g2 .lab { width: 84px; } .g3 .lab { width: 167px; }
.field { width: 260px; height: 48px; border: 2px solid #8a8886; background: #fff; padding: 3px 5px 0 9px; display: flex; align-items: center; justify-content: space-between; color: #323130; }
.g3 .field { padding-left: 8px; }
.cv { width: 12px; height: 8px; fill: none; stroke: #252423; stroke-width: 2; margin-top: 6px; }
.sym { color: #3b3a38; line-height: 40px; height: 40px; }
.dollar { font-size: 32px; width: 42px; padding-left: 6px; }
.dcv { margin-top: 3px; }
.pct { font-size: 34px; padding-left: 16px; width: 70px; }
.dec { margin-left: 14px; }
.spin { margin-left: 39px; width: 144px; height: 48px; border: 2px solid #8a8886; background: #fff; display: flex; align-items: center; justify-content: space-between; padding: 0 7px 0 9px; }
.arrows { display: flex; flex-direction: column; gap: 16px; }
.arrows .cv { margin: 0; }
.gl { margin-top: auto; margin-bottom: 0; font-size: 18.6px; line-height: 21px; text-align: center; color: #484644; }
.big { align-items: center; }
.big > svg { margin: 10px 0 7px; }
.g4 > svg { margin-left: 4px; }
.bl { height: 32px; line-height: 32px; display: flex; align-items: center; gap: 4px; color: #323130; }
.bl .cv { margin-top: 3px; }
.g4 .bl:has(.cv), .g5 .bl:has(.cv) { margin-right: 3px; }
.collapse { margin: 157px 10px 0 auto; }

.main { height: 1472px; flex: none; display: flex; }
.left { width: 2348px; display: flex; flex-direction: column; flex: none; }
.work { height: 1402px; display: flex; flex: none; }
.rail { width: 80px; background: #f3f2f1; }
.rbtn { height: 80px; display: flex; align-items: center; padding-left: 24px; }
.rbtn.on { border-left: 6px solid #117865; padding: 0 0 2px 22px; }
.rbtn:nth-child(2) { padding: 0 0 4px 26px; }
.rbtn:nth-child(3) { padding-bottom: 2px; }
.center { width: 2268px; display: flex; flex-direction: column; background: linear-gradient(#b3b0ad, #b3b0ad) 1866px 0 / 2px 100% no-repeat #fff; }
.formula { display: flex; padding: 8px 8px 0; gap: 6px; height: 64px; }
.fbtns { width: 152px; border: 2px solid #c8c6c4; background: #fff; display: flex; align-items: center; padding-left: 20px; gap: 26px; }
.fbox { flex: 1; border: 2px solid #a19f9d; background: #fffffe; display: flex; padding-left: 2px; }
code { font: 22px/49px "Liberation Mono", monospace; height: 50px; white-space: pre; }
.ln { width: 32px; color: #101080; }
.k { color: #000; } .fn { color: #3165bb; } .par1 { color: #0431fa; } .par2 { color: #319331; } .id { color: #001080; } .br { color: #7b3814; } .nm { color: #098658; }
.fend { margin-left: auto; width: 72px; border-left: 1px solid #e1dfdd; display: flex; justify-content: space-between; align-items: center; padding-right: 10px; }
.fend b { width: 28px; height: 4px; background: #484644; align-self: flex-start; margin-top: 4px; }
.fend svg { margin-top: 6px; }
.stage { flex: 1; display: flex; min-height: 0; }
.canvas { width: 1868px; position: relative; flex: none; }
.din { font-family: Roboto, sans-serif; color: #252423; transform-origin: 0 50%; display: inline-block; position: absolute; }
.cardtitle { left: 287px; top: 239px; font-weight: 700; font-size: 55px; line-height: 64px; }
.card { position: absolute; left: 287px; top: 307px; width: 476px; height: 369px; border: 2px solid #bdbdbd; }
.clabel { position: absolute; left: 16px; top: 119px; color: #605e5c; }
.cval { left: 20px; top: 162px; font-size: 77px; line-height: 90px; font-weight: 400; -webkit-text-stroke: .8px #252423; }
.chart { position: absolute; left: 1010px; top: 166px; font-family: "Open Sans", sans-serif; }
.pageend { position: absolute; left: 4px; right: 2px; top: 986px; height: 3px; background: repeating-linear-gradient(90deg, #605e5c 0 3px, transparent 3px 6px); }
.filters { width: 400px; }
.fsearch { margin: 27px 24px 8px 16px; height: 62px; border: 2px solid #b3b0ad; border-radius: 4px; display: flex; align-items: center; font-size: 24.200px; }
.fsearch svg { margin: 0 27px 0 20px; }
.fsearch span { padding-bottom: 1px; }
.fbody { border-top: 2px solid #b3b0ad; padding: 33px 16px 0; display: flex; flex-direction: column; }
.fh { height: 34px; line-height: 34px; margin-bottom: 16px; display: flex; justify-content: space-between; align-items: center; padding-right: 9px; flex: none; }
.fh.later { margin-top: 41px; margin-bottom: 16.5px; }
.fc { height: 91px; margin-bottom: 13px; border: 2px solid #c8c8c8; border-radius: 4px; display: flex; align-items: center; justify-content: center; padding-top: 3px; flex: none; }
.fc.two { flex-direction: column; align-items: flex-start; padding: 0 0 2px 16px; }
.two span { line-height: 35px; }
.dots { width: 22px; height: 4px; margin-top: 7px; background: radial-gradient(circle at 2px 2px, #323130 1.500px, transparent 2px) 0 0 / 9px 4px; flex: none; }

.pages { height: 70px; display: flex; background: #f3f2f1; }
.devices { width: 336px; border-right: 2px solid #a6a6a6; display: flex; padding-left: 100px; }
.desk { width: 48px; padding: 14px 0 0 4px; }
.desk i { display: block; width: 48px; height: 6px; border-radius: 3px; background: #117865; margin: 11px 0 0 -5px; }
.phone { margin: 8px 0 0 51px; }
.prev { margin: 27px 0 0 41px; } .next { margin: 27px 0 0 36px; }
.ptab { padding-top: 22px; display: flex; justify-content: center; border-right: 2px solid #c8c6c4; }
.first { width: 244px; }
.current { width: 168px; background: #fff; border-bottom: 8px solid #117865; font-weight: 600; }
.last { width: 216px; padding-left: 2px; }
.plus { width: 78px; height: 64px; margin-top: 3px; background: #117865; display: flex; align-items: center; justify-content: center; }

.viz { width: 362px; border-left: 2px solid #e1dfdd; flex: none; display: flex; flex-direction: column; }
.data { width: 362px; border-left: 2px solid #e1dfdd; flex: none; }
.ph { height: 78px; display: flex; align-items: center; justify-content: space-between; padding: 0 15px 0 16px; }
.ph h2 { font-size: 29.8px; font-weight: 600; line-height: 78px; }
.build { height: 28px; line-height: 28px; padding-left: 16px; font-weight: 600; }
.vtabs { display: flex; justify-content: space-between; padding: 9px 16px 0; height: 73px; }
.vt { width: 64px; height: 64px; display: flex; align-items: center; justify-content: center; border-radius: 4px; }
.vt.on { background: #d2d0ce; }
.paint { padding-left: 4px; }
.notch { margin-top: 8px; }
.vgrid { display: grid; grid-template-columns: repeat(6, 56px); grid-auto-rows: 56px; padding: 10px 0 0 12px; height: 410px; flex: none; }
.vcell { display: flex; align-items: center; justify-content: center; }
.picked { width: 48px; height: 48px; background: #e1dfdd; border: 2px solid #605e5c; padding: 4px; }
.wellwrap { border-top: 2px solid #e1dfdd; height: 838px; overflow: hidden; display: flex; flex: none; }
.wells { width: 348px; padding: 18.5px 0 0 8px; color: #323130; }
.wl { height: 30px; margin-bottom: 12px; padding-left: 16px; }
.wb { width: 340px; border: 2px dashed #c8c6c4; border-radius: 4px; background: #fff; margin-bottom: 23px; padding: 6px 4px 0; }
.ph0 { display: inline-block; padding: 6px 0 0 16px; }
.pill { height: 46px; border: 2px solid #c8c6c4; border-radius: 4px; background: #edebe9; display: flex; align-items: center; padding: 1px 8px 0 8px; }
.pill span { flex: 1; }
.pill svg { margin-top: -1px; }
.pill svg + svg { margin-left: 12px; }
.sbar { width: 12px; height: 634px; margin-top: 4px; border-radius: 6px; background: #d2d0ce; }

.dsearch { margin: 13px 8px 18px; height: 53px; border: 2px solid #797774; border-radius: 4px; display: flex; align-items: center; color: #484644; font-size: 25.300px; padding-left: 13px; }
.dsearch span { margin-left: 13px; padding-top: 2px; }
.tr { height: 48px; margin: 0 10px; display: flex; align-items: center; color: #3b3a38; }
.tr > span { padding-top: 3px; }
.tr .exp { width: 66px; display: flex; justify-content: flex-end; padding-right: 13px; }
.exp svg { fill: none; stroke: #3b3a38; stroke-width: 1.700; }
.tb .exp { width: 36px; justify-content: center; padding-right: 4px; }
.selected { background: #d2d0ce; }
.ticon { width: 36px; position: relative; }
.badge { position: absolute; left: 12px; top: 12px; }
.check { width: 24px; height: 24px; border: 2px solid #8a8886; border-radius: 4px; margin-right: 16px; }
.check.ck { border: 0; background: #117865; }
.kind { width: 36px; }
.tr .dots { margin: 0 5px 0 auto; }

.status { height: 48px; flex: none; border-top: 2px solid #e1dfdd; border-bottom: 1px solid #000; display: flex; padding: 9px 38px 0 10px; color: #484644; justify-content: space-between; }
.zoom { display: flex; height: 28px; align-items: center; color: #605e5c; margin-top: -1px; }
.zoom span { padding: 2px 0 0 33px; width: 110px; }

.taskbar { height: 80px; flex: none; background: linear-gradient(90deg, #21363f 0, #20343f 50%, #1d2c40 75%, #1b2742 100%); display: flex; color: #fff; }
.app { height: 80px; display: flex; align-items: center; justify-content: center; width: 96px; }
.ff { width: 80px; margin-left: 14px; border-bottom: 4px solid #76b9ed; padding-top: 2px; }
.ex { width: 108px; padding-left: 7px; }
.pb { width: 96px; background: #4f626b; border-bottom: 4px solid #76b9ed; padding: 4px 0 0 1px; }
.tray { margin-left: auto; display: flex; align-items: center; height: 80px; }
.wx { margin-right: 15px; padding-bottom: 0; }
.temp { font-size: 26px; width: 72px; padding-top: 1px; }
.cloudy { font-size: 26px; width: 222px; padding-top: 1px; }
.t1 { margin-right: 25px; } .t2 { margin-right: 17px; } .t3 { margin-right: 14px; } .t4 { margin-right: 19px; } .t5 { margin-right: 17px; } .t6 { margin-right: 22px; }
.clock { display: flex; flex-direction: column; align-items: center; width: 112px; line-height: 37px; padding-top: 1px; margin-right: 35px; }
.edge { width: 2px; height: 80px; background: #6b7484; margin: 0 8px 0 39px; }
</style>
